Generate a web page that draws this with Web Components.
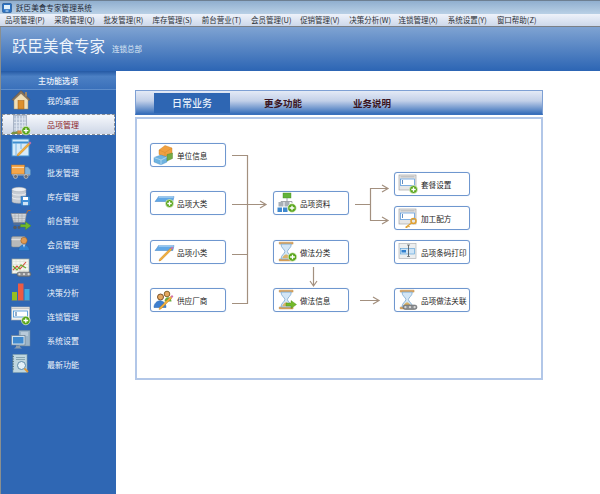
<!DOCTYPE html>
<html lang="zh">
<head>
<meta charset="utf-8">
<title>跃臣美食专家管理系统</title>
<style>
    html, body { margin: 0; height: 100%; overflow: hidden; background: #fff; }
    body { font-family: "Noto Sans CJK SC", "Liberation Sans", sans-serif; }
</style>
</head>
<body>
<app-window>
    <title-bar slot="title">跃臣美食专家管理系统</title-bar>
    <menu-bar slot="menu">
        <menu-item>品项管理(P)</menu-item>
        <menu-item>采购管理(Q)</menu-item>
        <menu-item>批发管理(R)</menu-item>
        <menu-item>库存管理(S)</menu-item>
        <menu-item>前台营业(T)</menu-item>
        <menu-item>会员管理(U)</menu-item>
        <menu-item>促销管理(V)</menu-item>
        <menu-item>决策分析(W)</menu-item>
        <menu-item>连锁管理(X)</menu-item>
        <menu-item>系统设置(Y)</menu-item>
        <menu-item>窗口帮助(Z)</menu-item>
    </menu-bar>
    <app-header slot="header" name="跃臣美食专家" branch="连锁总部"></app-header>
    <side-nav slot="side" heading="主功能选项">
        <nav-item icon="house" style="margin-top:-2px">我的桌面</nav-item>
        <nav-item icon="building" selected>品项管理</nav-item>
        <nav-item icon="purchase">采购管理</nav-item>
        <nav-item icon="truck">批发管理</nav-item>
        <nav-item icon="db">库存管理</nav-item>
        <nav-item icon="cart">前台营业</nav-item>
        <nav-item icon="member">会员管理</nav-item>
        <nav-item icon="promo">促销管理</nav-item>
        <nav-item icon="bars">决策分析</nav-item>
        <nav-item icon="chain">连锁管理</nav-item>
        <nav-item icon="system">系统设置</nav-item>
        <nav-item icon="news">最新功能</nav-item>
    </side-nav>
    <tab-panel>
        <flow-diagram>
            <flow-col style="--top:24px;--gap:24px">
                <flow-node icon="boxes">单位信息</flow-node>
                <flow-node icon="slabplus">品项大类</flow-node>
                <flow-node icon="slabpen" style="margin-top:1px">品项小类</flow-node>
                <flow-node icon="people">供应厂商</flow-node>
            </flow-col>
            <flow-col style="--top:72px;--gap:24px">
                <flow-node icon="org">品项资料</flow-node>
                <flow-node icon="glassplus" style="margin-top:1px">做法分类</flow-node>
                <flow-node icon="glassarrow">做法信息</flow-node>
            </flow-col>
            <flow-col style="--top:53px;--gap:10px">
                <flow-node icon="winplus">套餐设置</flow-node>
                <flow-node icon="winkey">加工配方</flow-node>
                <flow-node icon="winbar">品项条码打印</flow-node>
                <flow-node icon="glasschain" style="margin-top:14px">品项做法关联</flow-node>
            </flow-col>
        </flow-diagram>
    </tab-panel>
</app-window>

<script>
    // small reusable pieces for the icons
    const plus = (x, y, r = 4) => `
        <circle cx="${x}" cy="${y}" r="${r}" fill="#5aa61c" stroke="#e8f5d8" stroke-width=".7"/>
        <path d="M${x - r * .55} ${y}h${r * 1.1}M${x} ${y - r * .55}v${r * 1.1}" stroke="#fff" stroke-width="1.3"/>`;
    const pencil = (x, y) => `
        <path d="M${x} ${y}l2-.6 11-11-1.400-1.400-11 11z" fill="#f2b03c" stroke="#b96f14" stroke-width=".4"/>
        <path d="M${x + 11.600} ${y - 13}l1.400 1.400 1.400-1.400-1.400-1.400z" fill="#d070a8"/>`;
    const glass = `<g transform="translate(-1.2 -1.6) scale(1.15 1.2)">
        <path d="M3 1.5h12v1.6H3zM3 15.5h12v1.6H3z" fill="#e0a860" stroke="#b98442" stroke-width=".4"/>
        <path d="M4.5 3.1h9c0 3.4-3.4 4.4-3.4 6.2s3.4 2.8 3.4 6.2h-9c0-3.4 3.4-4.4 3.4-6.2s-3.4-2.8-3.4-6.2z" fill="#d3e6f6" stroke="#7ea9d0" stroke-width=".7"/>
        <path d="M5.6 14.8c.5-1.8 2-2.6 3.4-3.2 1.4.6 2.9 1.4 3.4 3.2z" fill="#d9b36a"/></g>`;
    const gear = (x, y) => `
        <rect x="${x}" y="${y}" width="14" height="4.4" rx="2.2" fill="#8c8f92" stroke="#55585c" stroke-width=".5"/>
        <circle cx="${x + 2.4}" cy="${y + 2.2}" r="1.1" fill="#d8d8d8"/>
        <circle cx="${x + 7}" cy="${y + 2.2}" r="1.1" fill="#d8d8d8"/>
        <circle cx="${x + 11.6}" cy="${y + 2.2}" r="1.1" fill="#d8d8d8"/>`;
    const frame = `
        <rect x="1" y="1" width="17" height="15" fill="#e6e6e6" stroke="#a6a6a6" stroke-width=".7"/>
        <rect x="2.5" y="5" width="14" height="6.5" fill="#fff" stroke="#4a90d9" stroke-width=".7"/>
        <path d="M2.5 2.8h14" stroke="#bcbcbc" stroke-width="1.2"/>
        <path d="M4.5 6v4" stroke="#3a6fb0" stroke-width=".8"/>`;
    const slab = `<path d="M3 6l1.500-2.500H20l-1.200 5H1z" fill="#62a8e6" stroke="#3b7fc4" stroke-width=".5"/><path d="M4.600 4h15" stroke="#c6e3f9"/>`;

    const ICONS = {
        house: `<path d="M10 .5L1 9.500l1.200 1.200L10 3.200l7.800 7.500L19 9.500z" fill="#8a7358" stroke="#5e4b38" stroke-width=".5"/>
            <path d="M3 10L10 3.500l7 6.500v9H3z" fill="#f0dfb8" stroke="#a78d62" stroke-width=".5"/>
            <rect x="7" y="10.500" width="6" height="8.500" fill="#dc8f2c" stroke="#9d5d12" stroke-width=".5"/>
            <path d="M14 2h2v4.500h-2z" fill="#9c8466"/>`,
        building: `<rect x="2.500" y="0" width="13" height="17" fill="#b8c4d6" stroke="#8694a8" stroke-width=".5"/>
            <path d="M5.500 1v15M8.500 1v15M11.500 1v15M14 1v15M3 4h12M3 7.500h12M3 11h12M3 14h12" stroke="#dfe6f0" stroke-width=".9"/>
            <path d="M0 18.500c1-1.800 2.500-2 4-1.400 1.600-1.200 3.400-1 5 0l2 1.800H0z" fill="#7d9440"/>
            <rect x="6.500" y="15.500" width="5" height="3" fill="#d48b3c"/>${plus(15, 15.600, 4.300)}`,
        purchase: `<rect x="1" y="1" width="17" height="17" fill="#d6ebf9" stroke="#3f8fd0" stroke-width="1"/>
            <path d="M1.500 4.500h16" stroke="#3f8fd0" stroke-width="2"/><path d="M5 5v12M10 5v6" stroke="#6fb0e2" stroke-width=".9"/>
            ${pencil(6, 18)}`,
        truck: `<rect x="0.500" y="3" width="13" height="9" fill="#f4a64a" stroke="#c97a1f" stroke-width=".5"/>
            <path d="M1 5.500h12" stroke="#fbd9a8"/>
            <path d="M14 5h3l2.500 3v5H14z" fill="#7fb2dd" stroke="#4d83b5" stroke-width=".5"/>
            <rect x="1" y="12" width="18" height="1.600" fill="#9aa2aa"/>
            <circle cx="4.500" cy="14.500" r="2" fill="#6b6f75" stroke="#d6d6d6" stroke-width=".6"/><circle cx="15" cy="14.500" r="2" fill="#6b6f75" stroke="#d6d6d6" stroke-width=".6"/>`,
        db: `<path d="M1 3.500C1 1 15 1 15 3.500v12c0 2.500-14 2.500-14 0z" fill="#c6ccd4" stroke="#8b939d" stroke-width=".5"/>
            <ellipse cx="8" cy="3.500" rx="7" ry="2.200" fill="#eceff3" stroke="#98a0aa" stroke-width=".4"/>
            <path d="M1 7.500c2 2 12 2 14 0M1 11.500c2 2 12 2 14 0" fill="none" stroke="#f0f2f5" stroke-width=".9"/>
            <rect x="10" y="10.500" width="9" height="9" fill="#3f8ed8" stroke="#236bb0" stroke-width=".5"/><rect x="12" y="11" width="5" height="3" fill="#fff"/><rect x="12" y="16" width="5" height="3.200" fill="#cfe4f6"/>`,
        cart: `<path d="M0 3.500h15.500L14 12.500H2.500z" fill="#d3d7dc" stroke="#7d8288" stroke-width=".6"/>
            <path d="M1 6h14M1.500 8.500h13M2 11h12M4 3.500v9M7.500 3.500v9M11 3.500v9" stroke="#8f949a" stroke-width=".4"/>
            <path d="M15.500 3.500l1.400-3h2.600" fill="none" stroke="#b66a33" stroke-width="1"/>
            <path d="M2.500 14h9" stroke="#70757b"/>
            <circle cx="4" cy="17.500" r="1.800" fill="#55595e"/><circle cx="8" cy="17.500" r="1.400" fill="#55595e"/>
            <path d="M9.500 14.500h5v-2.700l5.500 4-5.500 4v-2.700h-5z" fill="#72b92a" stroke="#4f8a17" stroke-width=".4"/>`,
        member: `<rect x="0.500" y="2.500" width="14" height="10.500" rx="1.500" fill="#b7b9ba" stroke="#87898b" stroke-width=".5"/>
            <path d="M0.500 5.500h14" stroke="#dedede" stroke-width="1.400"/>
            <circle cx="13" cy="6.500" r="3.200" fill="#e09a52" stroke="#8a5420" stroke-width=".5"/>
            <path d="M7.500 16.500c.3-4 3-5.800 5.500-5.800s5.200 1.800 5.500 5.800z" fill="#2f7fd0" stroke="#1f5ea0" stroke-width=".4"/>
            <path d="M12.200 10.800h1.600l-.8 3z" fill="#fff"/>`,
        promo: `<rect x="1" y="1" width="17" height="14.500" fill="#f4f6f0" stroke="#a2a89c" stroke-width=".7"/>
            <path d="M2 3.500h15M2 6.500h15M2 9.500h15M2 12.500h15M5 1.500v13M9 1.500v13M13 1.500v13" stroke="#ced6c8" stroke-width=".4"/>
            <path d="M2 12l4-4 3 3 6-7" fill="none" stroke="#d84a3a" stroke-width="1.100"/><path d="M2 8l4 4 4-5 5 3" fill="none" stroke="#6aab2a" stroke-width="1.100"/>${gear(6, 14)}`,
        bars: `<rect x="1" y="10" width="5" height="8.500" fill="#94bf22"/><rect x="7" y="1.500" width="5.500" height="17" fill="#ec5b44"/><rect x="13.500" y="7" width="5" height="11.500" fill="#3fa8df"/>
            <path d="M0 18.500h19" stroke="#777" stroke-width=".4"/>`,
        chain: `<rect x="0.500" y="1" width="18" height="13" fill="#f2f2f2" stroke="#b0b0b0" stroke-width=".6"/>
            <path d="M1 2.500h17" stroke="#c7c7c7" stroke-width="1.300"/><rect x="2.500" y="5" width="14" height="6" fill="#fff" stroke="#3f8fd8" stroke-width=".8"/><path d="M5 6v4" stroke="#2f5f98"/>${plus(14.800, 14.500, 4.300)}`,
        system: `<rect x="8" y="0.500" width="11" height="15.500" fill="#9cb4c8" stroke="#6d8599" stroke-width=".5"/><path d="M10 3h7M10 5h7" stroke="#e6eef5" stroke-width=".8"/>
            <rect x="0.500" y="5.500" width="13.500" height="9.500" fill="#cfe0ee" stroke="#6a7e90" stroke-width=".7"/><rect x="2" y="7" width="10.500" height="6.500" fill="#3f89cf"/>
            <path d="M5 15.500h4v1.500l2 1.500H3l2-1.500z" fill="#8b9dad"/>`,
        news: `<rect x="2" y="0.500" width="14" height="18" fill="#bfd6df" stroke="#7f9fac" stroke-width=".6"/>
            <path d="M1 2.500h2M1 5h2M1 7.500h2M1 10h2M1 12.500h2M1 15h2" stroke="#4f6d7a" stroke-width=".8"/>
            <path d="M5 3.500h9M5 5.500h9" stroke="#6f8f9d" stroke-width=".7"/>
            <circle cx="10.500" cy="11.500" r="4" fill="#e4f1f8" stroke="#5d8aa8" stroke-width="1"/><path d="M13.500 14.500l3.500 3.500" stroke="#e09a38" stroke-width="1.800"/>`,
        boxes: `<path d="M5 5l6-4.500 7 2.500v6L11 12 5 9.500z" fill="#f0a040" stroke="#c47a1c" stroke-width=".4"/><path d="M5 5l6 2.500 7-4.500M11 7.500V12" fill="none" stroke="#d18a2c" stroke-width=".5"/>
            <path d="M0 12.500L7 10l6 2v5l-6 2.800L0 17z" fill="#6fb4e0" stroke="#3d84bf" stroke-width=".4"/><path d="M0 12.500l7 2.500 6-3M7 15v4.800" fill="none" stroke="#d3e9f8" stroke-width=".6"/>
            <path d="M13 9.500l5.500-1.500v5.500L13 16z" fill="#74ab45" stroke="#4f8129" stroke-width=".4"/>`,
        slabplus: `${slab}${plus(15.500, 10.500, 4)}`,
        slabpen: `${slab}${pencil(5, 19)}`,
        people: `<circle cx="6.500" cy="7" r="3" fill="#e6a860" stroke="#6c4420" stroke-width=".9"/><circle cx="13" cy="4" r="2.800" fill="#e6a860" stroke="#7a5a20" stroke-width=".9"/>
            <path d="M10.500 11.500c0-2.500 1.500-4.300 3.500-4.300s3.500 1.800 3.500 4.300z" fill="#6aa83c"/>
            <path d="M0 17.500c0-4 3-6.800 6-6.800s6 2.800 6 6.800z" fill="#3d7fd0" stroke="#245ea5" stroke-width=".5"/>${pencil(5, 19.500)}`,
        org: `<rect x="6" y="0" width="8" height="5" fill="#64b33a" stroke="#3f8a1e" stroke-width=".4"/>
            <path d="M10 5v3.500M4 10V8.500h11V10" fill="none" stroke="#8a8f95" stroke-width=".8"/>
            <rect x="1.500" y="9" width="5" height="4.500" fill="#a9b0b7"/><rect x="7.500" y="9" width="5" height="4.500" fill="#a9b0b7"/>
            <rect x="0.500" y="14.500" width="4.500" height="4.500" fill="#3f89cf"/><rect x="6" y="14.500" width="4.500" height="4.500" fill="#3f89cf"/>${plus(15, 15, 4.300)}`,
        glassplus: `${glass}${plus(15.500, 15, 4.300)}`,
        glassarrow: `${glass}<path d="M9 13h5v-2.500l5.500 4-5.500 4V16H9z" fill="#72b92a" stroke="#4f8a17" stroke-width=".4"/>`,
        glasschain: `${glass}${gear(5, 15)}`,
        winplus: `${frame}${plus(15.500, 15.500, 4)}`,
        winkey: `${frame}<circle cx="15.500" cy="13" r="2.500" fill="none" stroke="#e0a030" stroke-width="1.500"/><path d="M13.500 15l-6 4.500M10 17.500l1.500 1.500M8.500 18.500l1 1" stroke="#e0a030" stroke-width="1.300"/>`,
        winbar: `<rect x="1" y="1.500" width="17" height="15" fill="#eceeef" stroke="#b0b4b8" stroke-width=".7"/>
            <rect x="2.500" y="6.500" width="14" height="5.500" fill="#cfe5f7" stroke="#4f9ad8" stroke-width=".6"/><rect x="3.500" y="8" width="4.500" height="2.500" fill="#2f7fcf"/>
            <path d="M10.500 3v11.500" stroke="#5a6066" stroke-width=".9"/><path d="M9 3h3M9 14.500h3" stroke="#5a6066" stroke-width=".7"/>`,
    };

    class AppIcon extends HTMLElement {
        connectedCallback() {
            const size = this.getAttribute("size") || 20;
            const shadow = this.shadowRoot || this.attachShadow({ mode: "open" });
            shadow.innerHTML = `
                <style>
                    :host { display: block; width: ${size}px; height: ${size}px; flex: none; }
                    svg { display: block; width: 100%; height: 100%; overflow: visible; }
                </style>
                <svg viewBox="0 0 20 20">${ICONS[this.getAttribute("name")] || ""}</svg>
            `;
        }
    }
    customElements.define("app-icon", AppIcon);

    class AppWindow extends HTMLElement {
        constructor() {
            super();
            this.attachShadow({ mode: "open" }).innerHTML = `
                <style>
                    :host { display: flex; flex-direction: column; width: 600px; height: 494px; background: #fff; }
                    .body { flex: 1; display: flex; min-height: 0; }
                    .main { flex: 1; padding: 19px 57px 0 19px; }
                </style>
                <slot name="title"></slot>
                <slot name="menu"></slot>
                <slot name="header"></slot>
                <div class="body">
                    <slot name="side"></slot>
                    <div class="main"><slot></slot></div>
                </div>
            `;
        }
    }
    customElements.define("app-window", AppWindow);

    class TitleBar extends HTMLElement {
        constructor() {
            super();
            this.attachShadow({ mode: "open" }).innerHTML = `
                <style>
                    :host {
                        display: flex; align-items: center; gap: 4px; height: 13px; padding-left: 2px;
                        border-top: 1px solid #6d7f92;
                        background: linear-gradient(#90afcf, #b9d0e6);
                        font-size: 7.600px; color: #1e2a38;
                    }
                    svg { width: 10px; height: 10px; }
                </style>
                <svg viewBox="0 0 10 10">
                    <rect x=".5" y=".5" width="9" height="9" rx="1" fill="#2a72c4" stroke="#1a4d8c" stroke-width=".6"/>
                    <rect x="2" y="2" width="6" height="4.200" fill="#dff0fb"/>
                    <path d="M3.500 8h3" stroke="#dff0fb"/>
                </svg>
                <span><slot></slot></span>
            `;
        }
    }
    customElements.define("title-bar", TitleBar);

    class MenuBar extends HTMLElement {
        constructor() {
            super();
            this.attachShadow({ mode: "open" }).innerHTML = `
                <style>
                    :host {
                        display: flex; align-items: center; height: 12px; padding-left: 5px;
                        background: linear-gradient(#eef2fa, #cdd8ea);
                        border-bottom: 1px solid #7b8086;
                    }
                </style>
                <slot></slot>
            `;
        }
    }
    customElements.define("menu-bar", MenuBar);

    class MenuItem extends HTMLElement {
        constructor() {
            super();
            this.attachShadow({ mode: "open" }).innerHTML = `
                <style>
                    :host { display: block; width: 49.200px; font-size: 7.500px; line-height: 12px; color: #2b2f36; white-space: nowrap; }
                </style>
                <slot></slot>
            `;
        }
    }
    customElements.define("menu-item", MenuItem);

    class AppHeader extends HTMLElement {
        connectedCallback() {
            const shadow = this.shadowRoot || this.attachShadow({ mode: "open" });
            shadow.innerHTML = `
                <style>
                    :host {
                        display: flex; align-items: baseline; gap: 7px; height: 44px; box-sizing: border-box;
                        padding: 8px 0 0 11px; border-left: 1px solid #8a8f8f;
                        background: linear-gradient(#7fa3d2, #2c65b4);
                        color: #eef4fb;
                    }
                    .name { font-size: 15.500px; line-height: 20px; }
                    .branch { font-size: 7.500px; color: #dfe9f5; }
                </style>
                <span class="name">${this.getAttribute("name")}</span>
                <span class="branch">${this.getAttribute("branch")}</span>
            `;
        }
    }
    customElements.define("app-header", AppHeader);

    class SideNav extends HTMLElement {
        connectedCallback() {
            const shadow = this.shadowRoot || this.attachShadow({ mode: "open" });
            shadow.innerHTML = `
                <style>
                    :host {
                        display: flex; flex-direction: column; width: 115px; flex: none;
                        border-left: 1px solid #8a8f8f; background: #2f67b4;
                    }
                    h2 {
                        margin: 0; height: 19px; line-height: 19px; text-align: center;
                        font-size: 8px; font-weight: 500; color: #eef4fb; padding-right: 1px;
                        background: linear-gradient(#2459a4, #4c80c4 30%, #3a70ba);
                        border-bottom: 1px solid #5d8dcb; box-sizing: border-box;
                    }
                </style>
                <h2>${this.getAttribute("heading")}</h2>
                <slot></slot>
            `;
        }
    }
    customElements.define("side-nav", SideNav);

    class NavItem extends HTMLElement {
        connectedCallback() {
            const shadow = this.shadowRoot || this.attachShadow({ mode: "open" });
            shadow.innerHTML = `
                <style>
                    :host {
                        display: flex; align-items: center; height: 24px; box-sizing: border-box;
                        padding-left: 10px; gap: 16px; font-size: 8px; color: #eef4fb;
                    }
                    :host([selected]) {
                        height: 21px; margin: 2px 1px 1px 1px; padding-left: 8px;
                        border: 1px dashed #8a8f96; color: #8c1c28;
                        background: linear-gradient(#f6f8fc, #cdd6e6);
                    }
                    span { white-space: nowrap; }
                </style>
                <app-icon name="${this.getAttribute("icon")}" size="20"></app-icon>
                <span><slot></slot></span>
            `;
        }
    }
    customElements.define("nav-item", NavItem);

    class TabPanel extends HTMLElement {
        constructor() {
            super();
            this.attachShadow({ mode: "open" }).innerHTML = `
                <style>
                    :host { display: flex; flex-direction: column; gap: 2px; width: 408px; }
                    .tabs {
                        display: flex; height: 25px; box-sizing: border-box; padding: 2px 0 0 18px;
                        border: 1px solid #7ea0d4; border-bottom: 2px solid #3a70bb;
                        background: linear-gradient(#e4eaf6, #c2d0e8 45%, #3f74bd);
                    }
                    .tab {
                        width: 76px; margin-right: 13px; text-align: center; line-height: 20px;
                        font-size: 9.500px; font-weight: 700; color: #3a1420; white-space: nowrap;
                    }
                    .tab.on { background: #2e66b3; color: #eaf2fb; font-size: 10px; font-weight: 500; margin-right: 15px; }
                    .panel { height: 263px; box-sizing: border-box; border: 2px solid #b2c7e8; background: #fff; }
                </style>
                <div class="tabs">
                    <div class="tab on">日常业务</div>
                    <div class="tab">更多功能</div>
                    <div class="tab">业务说明</div>
                </div>
                <div class="panel"><slot></slot></div>
            `;
        }
    }
    customElements.define("tab-panel", TabPanel);

    class FlowDiagram extends HTMLElement {
        constructor() {
            super();
            this.attachShadow({ mode: "open" }).innerHTML = `
                <style>
                    :host {
                        display: flex; position: relative; gap: 47px; height: 100%;
                        margin-left: 13px;
                    }
                    svg { position: absolute; left: -15px; top: -2px; width: 408px; height: 263px; pointer-events: none; }
                </style>
                <slot></slot>
                <svg viewBox="135 117 408 263" fill="none" stroke="#a3907f" stroke-width="1.200">
                    <path d="M232 155.500h15.500v148H232M232 254.500h15.500"/>
                    <path d="M232 204.500h33M260 201l6 3.500-6 3.500" />
                    <path d="M313.500 267v18M310 281l3.500 5 3.500-5"/>
                    <path d="M355 204.500h15.500M387 188.500h-16.500v32H387M382 185l6 3.500-6 3.500M382 217l6 3.500-6 3.500"/>
                    <path d="M360 300.500h18M373 297l6 3.500-6 3.500"/>
                </svg>
            `;
        }
    }
    customElements.define("flow-diagram", FlowDiagram);

    class FlowCol extends HTMLElement {
        constructor() {
            super();
            this.attachShadow({ mode: "open" }).innerHTML = `
                <style>
                    :host {
                        display: flex; flex-direction: column; width: 76px; flex: none;
                        box-sizing: border-box; gap: var(--gap); padding-top: var(--top);
                    }
                    :host(:last-child) { margin-left: -2px; }
                </style>
                <slot></slot>
            `;
        }
    }
    customElements.define("flow-col", FlowCol);

    class FlowNode extends HTMLElement {
        connectedCallback() {
            const shadow = this.shadowRoot || this.attachShadow({ mode: "open" });
            shadow.innerHTML = `
                <style>
                    :host {
                        display: flex; align-items: center; gap: 3px; height: 24px; box-sizing: border-box;
                        padding-left: 3px; border: 1px solid #6f97cf; border-radius: 3px; background: #fff;
                        box-shadow: 0 0 1px #b9cde8;
                        font-size: 7.600px; color: #222; white-space: nowrap; position: relative; z-index: 1;
                    }
                </style>
                <app-icon name="${this.getAttribute("icon")}" size="20"></app-icon>
                <span><slot></slot></span>
            `;
        }
    }
    customElements.define("flow-node", FlowNode);
</script>
</body>
</html>
